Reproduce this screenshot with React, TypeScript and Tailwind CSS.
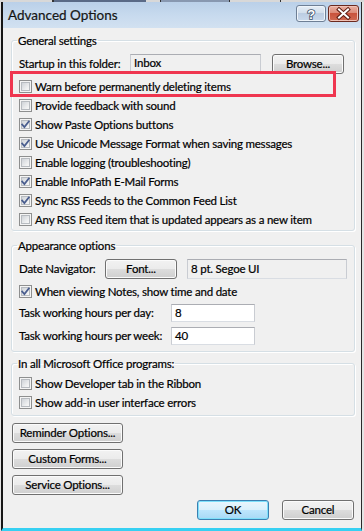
import React from "react";

function Check({ checked }: { checked?: boolean }) {
  return (
    <span className="relative flex w-[13px] h-[13px] shrink-0 border border-[#8e8f8f] bg-[#f4f4f4] p-[1px]">
      <span className="flex-1 border border-[#b7bbc0] bg-[linear-gradient(135deg,#cfd3d8_0%,#eeeff0_70%,#f7f7f7_100%)]" />
      {checked && (
        <svg className="absolute left-0 top-0" width="11" height="11" viewBox="0 0 11 11">
          <path d="M2.2 5.6 L4.4 8 L8.8 2.4" fill="none" stroke="#4a5e8f" strokeWidth="1.8" strokeLinecap="square" />
        </svg>
      )}
    </span>
  );
}

function CheckRow({ label, checked }: { label: string; checked?: boolean }) {
  return (
    <div className="h-[19px] flex items-center gap-[3px]">
      <Check checked={checked} />
      <span className="leading-[19px] whitespace-nowrap">{label}</span>
    </div>
  );
}

function Btn({ children, w, def }: { children: React.ReactNode; w: string; def?: boolean }) {
  return (
    <div
      className={
        "h-[20px] flex items-center justify-center rounded-[3px] border whitespace-nowrap " +
        w +
        " " +
        (def
          ? "border-[#3c7fb1] bg-[linear-gradient(to_bottom,#eaf6fd_0%,#d9f0fc_50%,#bee6fd_50%,#a7d9f5_100%)] shadow-[inset_0_0_0_1px_#7ee0fb]"
          : "border-[#707070] bg-[linear-gradient(to_bottom,#f2f2f2_0%,#ebebeb_50%,#dddddd_50%,#cfcfcf_100%)] shadow-[inset_0_0_0_1px_#fbfbfb]")
      }
    >
      {children}
    </div>
  );
}

function Field({ value, w, h, white }: { value: string; w: string; h: string; white?: boolean }) {
  return (
    <div
      className={
        "flex items-center pl-[3px] border border-[#abadb3] border-b-[#d9dde3] border-x-[#c9ccd2] whitespace-nowrap " +
        w +
        " " +
        h +
        " " +
        (white ? "bg-white" : "bg-[#f0f0f0]")
      }
    >
      {value}
    </div>
  );
}

function Group({ title, children, className }: { title: string; children: React.ReactNode; className?: string }) {
  return (
    <fieldset
      className={
        "border border-[#d5dfe5] rounded-[3px] shadow-[inset_1px_1px_0_#fff,1px_1px_0_#fff] p-0 m-0 min-w-0 " + (className ?? "")
      }
    >
      <legend className="ml-[5px] px-[1px] leading-[15px] whitespace-nowrap">{title}</legend>
      {children}
    </fieldset>
  );
}

export default function App() {
  return (
    <div className="w-[364px] h-[531px] flex flex-col overflow-hidden bg-[#e4e4e4] text-[11.5px] tracking-[-0.2px] text-[#000] [-webkit-text-stroke:0.2px_#000] font-['Lato',sans-serif]">
      {/* strip of the window behind */}
      <div className="h-[2px] flex bg-[#d8d8d8]">
        <div className="w-[52px]" />
        <div className="w-[2px] bg-[#333]" />
        <div className="w-[92px] bg-[#5a6a86]" />
        <div className="w-[14px]" />
        <div className="w-[1px] bg-[#333]" />
        <div className="w-[68px] bg-[#8898b0]" />
        <div className="w-[1px] bg-[#333]" />
        <div className="w-[50px]" />
        <div className="w-[1px] bg-[#333]" />
      </div>

      <div className="flex-1 flex flex-col ml-[1px] w-[361px] border-l-2 border-l-[#161616] border-r border-r-[#2a2a2a] border-b-[3px] border-b-[#36d0f2]">
        {/* title bar */}
        <div className="h-[26px] flex items-start bg-[linear-gradient(to_bottom,#bad0e8_0%,#c7daee_50%,#d2e1f1_100%)]">
          <div className="flex-1 pl-[5px] pt-[1px] h-[26px] flex items-center text-[13.5px] tracking-normal text-[#1b1b1b]">Advanced Options</div>
          <div className="flex gap-[2px] pt-[3px] pr-[2px]">
            <div className="w-[30px] h-[17px] rounded-[3px] border border-[#6e7f95] bg-[linear-gradient(to_bottom,#e6eef7_0%,#d3dfec_45%,#bccde2_50%,#c9d9ec_100%)] shadow-[inset_0_0_0_1px_#eef4fa] flex items-center justify-center [-webkit-text-stroke:0]">
              <svg width="28" height="15" viewBox="0 0 28 15">
                <text x="14" y="12.5" textAnchor="middle" fontFamily="'Liberation Sans',sans-serif" fontWeight="bold" fontSize="13" fill="#ffffff" stroke="#3e4f68" strokeWidth="1.6" paintOrder="stroke">?</text>
              </svg>
            </div>
            <div className="w-[31px] h-[17px] rounded-[3px] border border-[#6c2a1f] bg-[linear-gradient(to_bottom,#eab0a2_0%,#dc8b78_45%,#c9533c_50%,#d06a52_100%)] shadow-[inset_0_0_0_1px_#f0c2b6] flex items-center justify-center">
              <svg width="29" height="15" viewBox="0 0 29 15">
                <path d="M10 3.5 L19 11.5 M19 3.5 L10 11.5" stroke="#5b1c12" strokeWidth="4" strokeLinecap="square" />
                <path d="M10 3.5 L19 11.5 M19 3.5 L10 11.5" stroke="#ffffff" strokeWidth="2" strokeLinecap="square" />
              </svg>
            </div>
          </div>
        </div>

        {/* body */}
        <div className="relative flex-1 flex flex-col bg-[#f0f0f0] pl-[8px] pr-[6px] pt-[5px]">
          <Group title="General settings">
            <div className="px-[7px] pt-[6px] pb-[1px]">
              <div className="flex items-start">
                <div className="w-[111px] leading-[20px] whitespace-nowrap">Startup in this folder:</div>
                <Field value="Inbox" w="w-[131px]" h="h-[18px]" />
                <div className="ml-[11px]">
                  <Btn w="w-[72px]">Browse...</Btn>
                </div>
              </div>
              <div className="mt-[3px] flex flex-col">
                <CheckRow label="Warn before permanently deleting items" />
                <CheckRow label="Provide feedback with sound" />
                <CheckRow label="Show Paste Options buttons" checked />
                <CheckRow label="Use Unicode Message Format when saving messages" checked />
                <CheckRow label="Enable logging (troubleshooting)" />
                <CheckRow label="Enable InfoPath E-Mail Forms" checked />
                <CheckRow label="Sync RSS Feeds to the Common Feed List" checked />
                <CheckRow label="Any RSS Feed item that is updated appears as a new item" />
              </div>
            </div>
          </Group>

          <Group title="Appearance options" className="mt-[7px]">
            <div className="px-[7px] pt-[6px] pb-[6px]">
              <div className="flex items-start">
                <div className="w-[87px] leading-[20px] whitespace-nowrap">Date Navigator:</div>
                <Btn w="w-[73px]">Font...</Btn>
                <div className="ml-[10px]">
                  <Field value="8 pt. Segoe UI" w="w-[160px]" h="h-[20px]" />
                </div>
              </div>
              <div className="mt-[3px]">
                <CheckRow label="When viewing Notes, show time and date" checked />
              </div>
              <div className="mt-[3px] flex items-center">
                <div className="w-[152px] whitespace-nowrap">Task working hours per day:</div>
                <Field value="8" w="w-[84px]" h="h-[18px]" white />
              </div>
              <div className="mt-[5px] flex items-center">
                <div className="w-[152px] whitespace-nowrap">Task working hours per week:</div>
                <Field value="40" w="w-[84px]" h="h-[18px]" white />
              </div>
            </div>
          </Group>

          <Group title="In all Microsoft Office programs:" className="mt-[4px]">
            <div className="px-[7px] pt-[3px] pb-[3px]">
              <CheckRow label="Show Developer tab in the Ribbon" />
              <CheckRow label="Show add-in user interface errors" />
            </div>
          </Group>

          <div className="mt-[7px] ml-[1px] flex flex-col gap-[6px]">
            <Btn w="w-[111px]">Reminder Options...</Btn>
            <Btn w="w-[111px]">Custom Forms...</Btn>
            <Btn w="w-[111px]">Service Options...</Btn>
          </div>

          <div className="mt-[5px] flex justify-end gap-[13px] pr-[1px]">
            <Btn w="w-[72px]" def>OK</Btn>
            <Btn w="w-[72px]">Cancel</Btn>
          </div>

          {/* red annotation rectangle */}
          <div className="absolute left-[7px] top-[43px] w-[326px] h-[26px] border-[3px] border-[#ef3650]" />
        </div>
      </div>
    </div>
  );
}
